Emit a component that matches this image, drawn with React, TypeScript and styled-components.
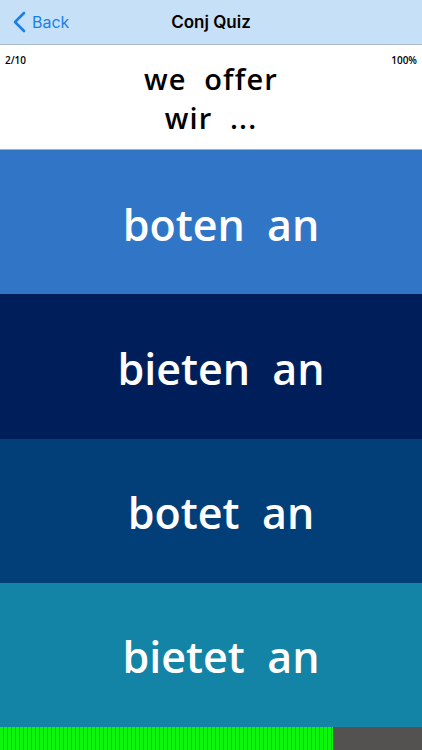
import React from "react";
import styled, { createGlobalStyle } from "styled-components";

const GlobalStyle = createGlobalStyle`
  html, body {
    margin: 0;
    padding: 0;
    background: #ffffff;
  }
  body {
    font-family: "Open Sans", "Liberation Sans", sans-serif;
  }
`;

const Screen = styled.div`
  width: 422px;
  height: 750px;
  display: flex;
  flex-direction: column;
  overflow: hidden;
`;

const NavBar = styled.div`
  height: 45px;
  flex: 0 0 45px;
  background: #c6e1f7;
  border-bottom: 1px solid #a9bccb;
  display: grid;
  grid-template-columns: 1fr auto 1fr;
  align-items: center;
  box-sizing: border-box;
`;

const BackButton = styled.div`
  display: flex;
  align-items: center;
  gap: 6px;
  padding-left: 13px;
  color: #1b7fe9;
  font-family: "Inter", "Liberation Sans", sans-serif;
  font-size: 16px;
`;

const Title = styled.div`
  font-family: "Inter", "Liberation Sans", sans-serif;
  font-weight: 600;
  font-size: 17px;
  color: #000;
`;

const QuestionPanel = styled.div`
  flex: 0 0 105px;
  height: 105px;
  display: grid;
  grid-template-columns: 60px 1fr 60px;
  background: #fff;
  border-bottom: 1px solid #8fb4e0;
  box-sizing: border-box;
`;

const Counter = styled.div<{ $align: "left" | "right" }>`
  font-size: 10px;
  font-weight: 600;
  color: #000;
  padding: 8px 5px 0;
  text-align: ${(p) => p.$align};
`;

const Prompt = styled.div`
  text-align: center;
  font-size: 29px;
  font-weight: 600;
  line-height: 39px;
  letter-spacing: 1.2px;
  color: #000;
  padding-top: 14px;
  white-space: pre;
`;

const Options = styled.div`
  flex: 1;
  display: flex;
  flex-direction: column;
`;

const Option = styled.div<{ $bg: string }>`
  flex: 1;
  display: flex;
  align-items: center;
  justify-content: center;
  padding-left: 20px;
  padding-top: 4px;
  background: ${(p) => p.$bg};
  color: #fff;
  font-size: 43px;
  font-weight: 600;
  letter-spacing: 0px;
  white-space: pre;
`;

const Progress = styled.div`
  flex: 0 0 23px;
  height: 23px;
  display: flex;
  background: #545250;
`;

const ProgressFill = styled.div`
  height: 100%;
  background: repeating-linear-gradient(
    90deg,
    #0df50d 0px,
    #0df50d 3px,
    #08c80a 3px,
    #08c80a 4px
  );
`;

const ChevronLeft = () => (
  <svg width="13" height="22" viewBox="0 0 13 22" fill="none">
    <path
      d="M11 2 L2 11 L11 20"
      stroke="#1b7fe9"
      strokeWidth="2.6"
      strokeLinecap="round"
      strokeLinejoin="round"
    />
  </svg>
);

const answers = [
  { text: "boten  an", bg: "#3176c6" },
  { text: "bieten  an", bg: "#001f5a" },
  { text: "botet  an", bg: "#023f78" },
  { text: "bietet  an", bg: "#1383a6" },
];

export default function App() {
  const progress = 333;

  return (
    <Screen>
      <GlobalStyle />
      <NavBar>
        <BackButton>
          <ChevronLeft />
          <span>Back</span>
        </BackButton>
        <Title>Conj Quiz</Title>
        <div />
      </NavBar>
      <QuestionPanel>
        <Counter $align="left">2/10</Counter>
        <Prompt>{"we  offer\nwir  ..."}</Prompt>
        <Counter $align="right">100%</Counter>
      </QuestionPanel>
      <Options>
        {answers.map((a) => (
          <Option key={a.text} $bg={a.bg}>
            {a.text}
          </Option>
        ))}
      </Options>
      <Progress>
        <ProgressFill style={{ width: progress }} />
      </Progress>
    </Screen>
  );
}
